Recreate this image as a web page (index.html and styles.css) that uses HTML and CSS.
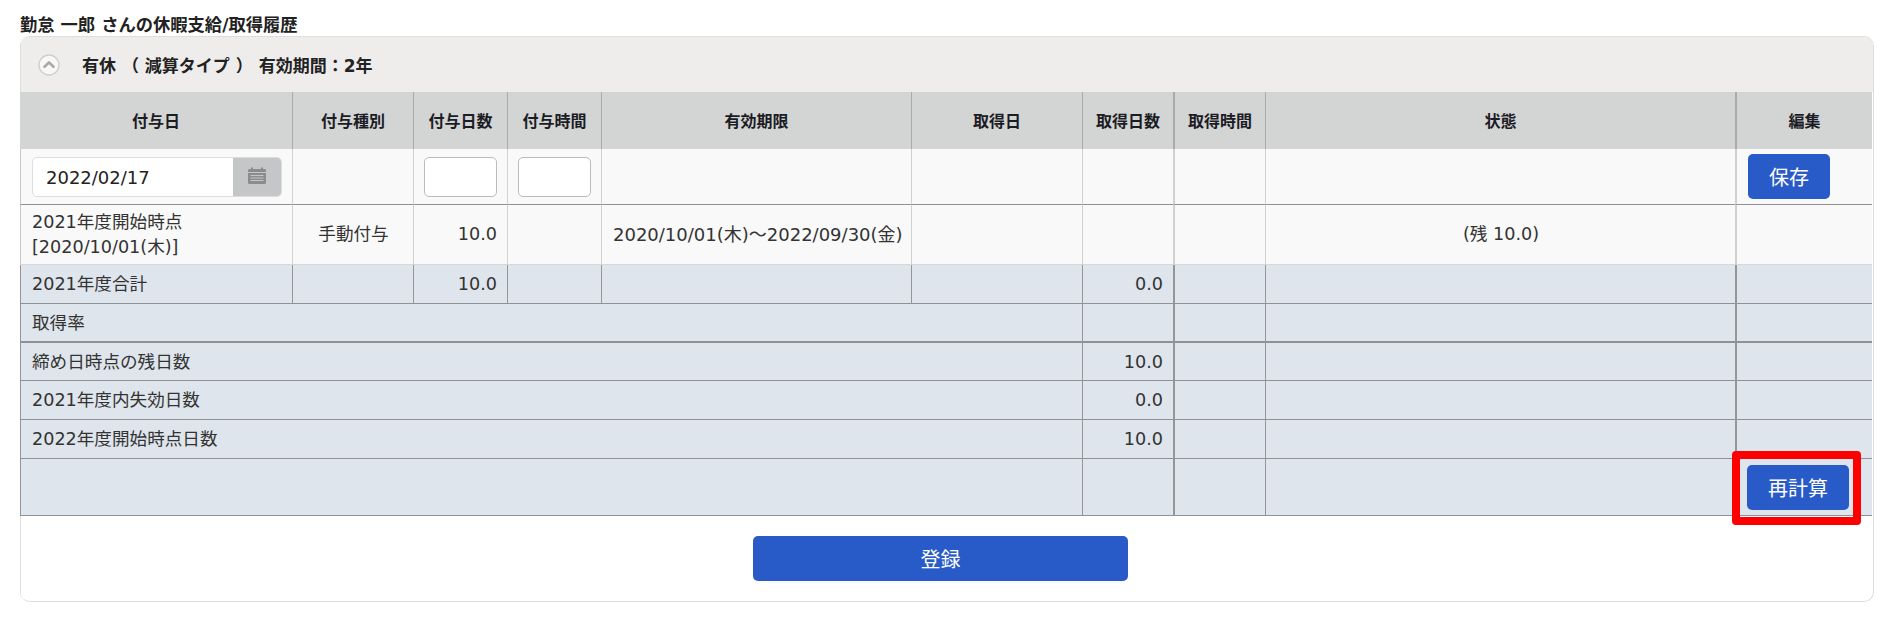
FILE: index.html
```html
<!DOCTYPE html>
<html lang="ja">
<head>
    <meta charset="UTF-8">
    <title>休暇支給/取得履歴</title>
    <link rel="stylesheet" href="styles.css">
</head>
<body>
    <h2 class="page-title">勤怠 一郎 さんの休暇支給/取得履歴</h2>
    <div class="panel">
        <div class="panel-head">
            <span class="toggle-icon">
                <svg xmlns="http://www.w3.org/2000/svg" viewBox="0 0 22 22" fill="none">
                    <circle cx="11" cy="11" r="10" fill="#f7f7f7" stroke="#cfcfcf" stroke-width="1.4"></circle>
                    <path d="M6.5 12.8 11 8.4l4.5 4.4" stroke="#a8a8a8" stroke-width="2.6" stroke-linecap="round" stroke-linejoin="round"></path>
                </svg>
            </span>
            <span class="panel-title">有休 （ 減算タイプ ） 有効期間：2年</span>
        </div>
        <table class="grant-table">
            <colgroup>
                <col class="col-date">
                <col class="col-type">
                <col class="col-days">
                <col class="col-time">
                <col class="col-limit">
                <col class="col-taken">
                <col class="col-tdays">
                <col class="col-ttime">
                <col class="col-state">
                <col class="col-edit">
            </colgroup>
            <thead>
                <tr>
                    <th>付与日</th>
                    <th>付与種別</th>
                    <th>付与日数</th>
                    <th>付与時間</th>
                    <th>有効期限</th>
                    <th>取得日</th>
                    <th>取得日数</th>
                    <th class="thick">取得時間</th>
                    <th>状態</th>
                    <th class="thick">編集</th>
                </tr>
            </thead>
            <tbody>
                <tr class="row-input">
                    <td>
                        <div class="date-field">
                            <span class="date-value">2022/02/17</span>
                            <span class="date-addon">
                                <svg xmlns="http://www.w3.org/2000/svg" viewBox="0 0 18 17">
                                    <path d="M3 .5h2V2h8V.5h2V2h1.500A1.500 1.500 0 0 1 18 3.500V5H0V3.500A1.500 1.500 0 0 1 1.500 2H3z" fill="#8a8c8e"></path>
                                    <path d="M0 6h18v9.500A1.500 1.500 0 0 1 16.500 17h-15A1.500 1.500 0 0 1 0 15.500z" fill="#8a8c8e"></path>
                                    <path d="M2.500 8.500h13M2.500 11h13M2.500 13.500h13" stroke="#c4c6c8" stroke-width="1"></path>
                                </svg>
                            </span>
                        </div>
                    </td>
                    <td></td>
                    <td class="center"><input class="num-input" type="text"></td>
                    <td class="center"><input class="num-input" type="text"></td>
                    <td></td>
                    <td></td>
                    <td></td>
                    <td class="thick"></td>
                    <td></td>
                    <td class="thick btn-cell"><button class="btn btn-save">保存</button></td>
                </tr>
                <tr class="row-grant">
                    <td>2021年度開始時点<br>[2020/10/01(木)]</td>
                    <td class="center">手動付与</td>
                    <td class="right">10.0</td>
                    <td></td>
                    <td class="center period">2020/10/01(木)～2022/09/30(金)</td>
                    <td></td>
                    <td></td>
                    <td class="thick"></td>
                    <td class="center">(残 10.0)</td>
                    <td class="thick"></td>
                </tr>
                <tr class="row-sum row-total">
                    <td>2021年度合計</td>
                    <td></td>
                    <td class="right">10.0</td>
                    <td></td>
                    <td></td>
                    <td></td>
                    <td class="right">0.0</td>
                    <td class="thick"></td>
                    <td></td>
                    <td class="thick"></td>
                </tr>
                <tr class="row-sum row-rate">
                    <td colspan="6">取得率</td>
                    <td></td>
                    <td class="thick"></td>
                    <td></td>
                    <td class="thick"></td>
                </tr>
                <tr class="row-sum row-remain">
                    <td colspan="6">締め日時点の残日数</td>
                    <td class="right">10.0</td>
                    <td class="thick"></td>
                    <td></td>
                    <td class="thick"></td>
                </tr>
                <tr class="row-sum row-lost">
                    <td colspan="6">2021年度内失効日数</td>
                    <td class="right">0.0</td>
                    <td class="thick"></td>
                    <td></td>
                    <td class="thick"></td>
                </tr>
                <tr class="row-sum row-next">
                    <td colspan="6">2022年度開始時点日数</td>
                    <td class="right">10.0</td>
                    <td class="thick"></td>
                    <td></td>
                    <td class="thick"></td>
                </tr>
                <tr class="row-sum row-action">
                    <td colspan="6"></td>
                    <td></td>
                    <td class="thick"></td>
                    <td></td>
                    <td class="btn-cell">
                        <span class="marked">
                            <button class="btn btn-recalc">再計算</button>
                            <span class="mark-box"></span>
                        </span>
                    </td>
                </tr>
            </tbody>
        </table>
        <div class="panel-foot">
            <button class="btn btn-submit">登録</button>
        </div>
    </div>
</body>
</html>
```

FILE: styles.css
```css
* {
    box-sizing: border-box;
}
body {
    margin: 0;
    padding: 14px 13px 15px 20px;
    font-family: "DejaVu Sans", "Noto Sans CJK JP", sans-serif;
    font-size: 17.6px;
    color: #333;
    background-color: #fff;
}
.page-title {
    margin: 0;
    height: 22px;
    font-size: 17.3px;
    line-height: 22px;
    font-weight: bold;
    color: #222;
}
.panel {
    border: 1px solid #ddd;
    border-left-width: 0;
    border-radius: 10px;
    overflow: hidden;
}
.panel-head {
    display: flex;
    align-items: center;
    height: 55px;
    padding-left: 17px;
    background-color: #eeedec;
    border-left: 1px solid #ddd;
}
.toggle-icon {
    display: flex;
    width: 22px;
    height: 22px;
    margin-right: 22px;
}
.panel-title {
    font-size: 17px;
    font-weight: bold;
    color: #222;
}
.grant-table {
    width: 1852px;
    table-layout: fixed;
    border-collapse: separate;
    border-spacing: 0;
}
.col-date { width: 272px; }
.col-type { width: 121px; }
.col-days { width: 94px; }
.col-time { width: 94px; }
.col-limit { width: 310px; }
.col-taken { width: 171px; }
.col-tdays { width: 91px; }
.col-ttime { width: 92px; }
.col-state { width: 470px; }
.col-edit { width: 137px; }
th {
    height: 57px;
    padding: 0 4px 2px;
    font-size: 16px;
    font-weight: bold;
    color: #1c1c24;
    background-color: #d3d5d5;
    border-left: 1px solid #a9abab;
}
th:first-child {
    border-left: 0;
}
td {
    padding: 0 10px 0 11px;
    line-height: 25px;
    border-left: 1px solid #d0d0d0;
    border-bottom: 1px solid #8e9296;
    background-color: #f9f9f9;
}
td:first-child {
    border-left: 1px solid #c8c8c8;
}
.thick {
    border-left-width: 2px;
}
.center {
    text-align: center;
}
.right {
    text-align: right;
}
.period {
    font-size: 18px;
    white-space: nowrap;
}
.row-input td {
    height: 56px;
}
.row-input .center {
    padding: 0;
}
.row-grant td {
    height: 60px;
    border-bottom-color: #d8d8d8;
}
.row-sum td {
    height: 39px;
    padding-top: 1px;
    background-color: #dfe5ec;
    border-left-color: #93979b;
}
.row-rate td {
    border-bottom-width: 2px;
}
.row-remain td {
    height: 38px;
}
.row-action td {
    height: 57px;
    padding-top: 0;
}
.date-field {
    display: flex;
    height: 40px;
    border: 1px solid #ddd;
    border-radius: 5px;
    background-color: #fff;
    overflow: hidden;
}
.date-value {
    flex: 1;
    padding-left: 13px;
    line-height: 40px;
    font-size: 18px;
    color: #222;
}
.date-addon {
    display: flex;
    align-items: center;
    justify-content: center;
    width: 48px;
    background-color: #c4c6c8;
}
.date-addon svg {
    width: 18px;
    height: 17px;
    margin-top: -3px;
}
.num-input {
    display: block;
    width: 73px;
    height: 40px;
    margin: 0 auto;
    border: 1px solid #bbb;
    border-radius: 5px;
    background-color: #fff;
}
.btn-cell {
    padding: 0 0 0 11px;
}
.btn {
    display: block;
    padding: 0;
    height: 45px;
    border: 0;
    border-radius: 5px;
    font-family: inherit;
    font-size: 20px;
    color: #fff;
    background-color: #295bc8;
}
.btn-save {
    width: 82px;
}
.btn-recalc {
    width: 102px;
}
.btn-submit {
    width: 375px;
    margin-right: 13px;
}
.marked {
    position: relative;
    display: block;
    width: 102px;
}
.mark-box {
    position: absolute;
    top: -14px;
    right: -12px;
    bottom: -15px;
    left: -15px;
    border: 8px solid #f00;
    border-radius: 4px;
}
.panel-foot {
    display: flex;
    justify-content: center;
    padding: 20px 0 20px;
    border-left: 1px solid #ddd;
}
```
